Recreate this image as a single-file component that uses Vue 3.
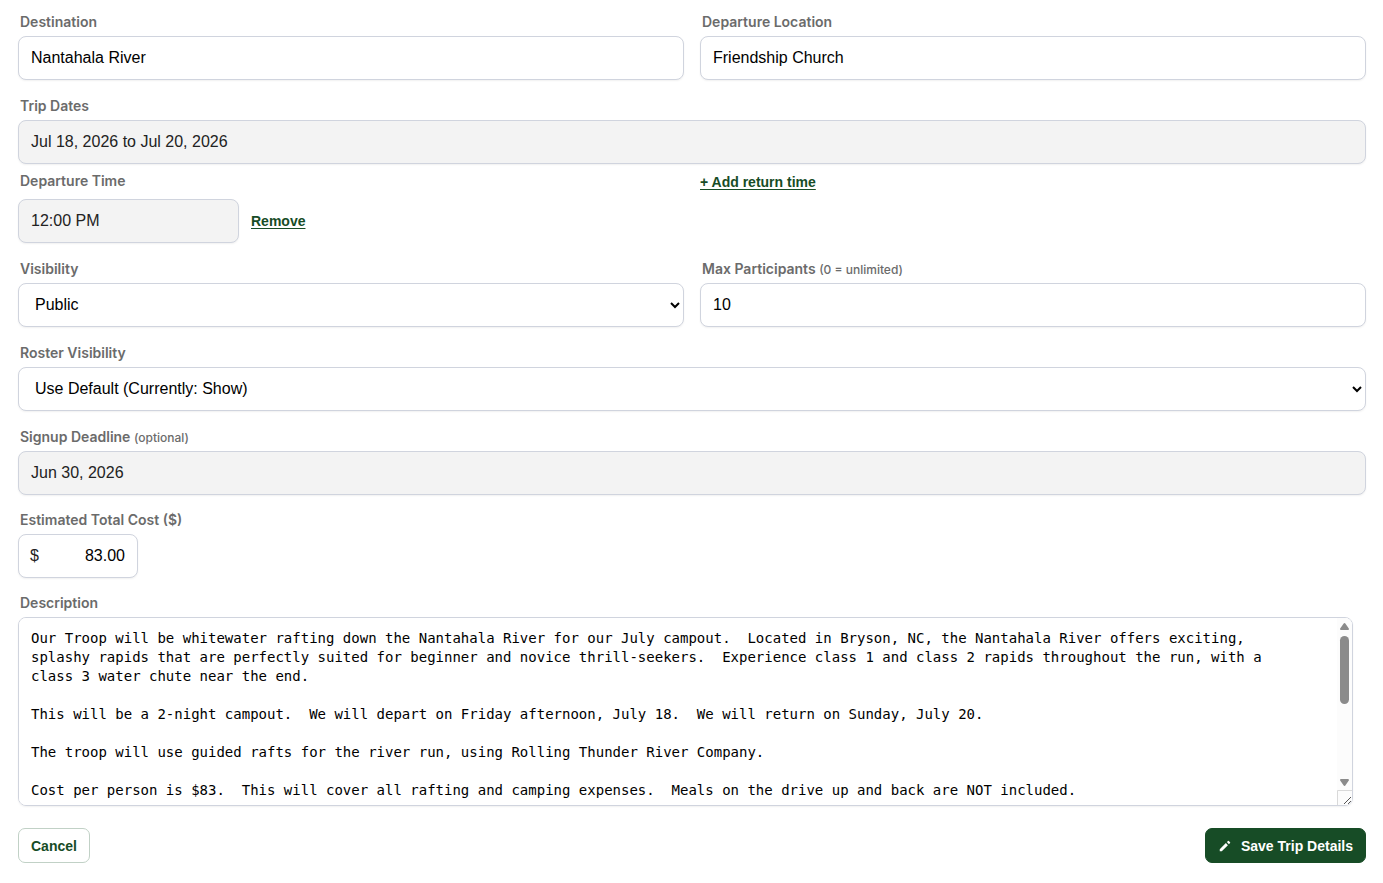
<script setup>
import { ref } from 'vue'

const destination = ref('Nantahala River')
const departureLocation = ref('Friendship Church')
const tripDates = ref('Jul 18, 2026 to Jul 20, 2026')
const departureTime = ref('12:00 PM')
const visibility = ref('public')
const maxParticipants = ref('10')
const rosterVisibility = ref('default')
const signupDeadline = ref('Jun 30, 2026')
const cost = ref('83.00')
const description = ref(
  [
    'Our Troop will be whitewater rafting down the Nantahala River for our July campout.  Located in Bryson, NC, the Nantahala River offers exciting, splashy rapids that are perfectly suited for beginner and novice thrill-seekers.  Experience class 1 and class 2 rapids throughout the run, with a class 3 water chute near the end.',
    'This will be a 2-night campout.  We will depart on Friday afternoon, July 18.  We will return on Sunday, July 20.',
    'The troop will use guided rafts for the river run, using Rolling Thunder River Company.',
    'Cost per person is $83.  This will cover all rafting and camping expenses.  Meals on the drive up and back are NOT included.',
  ].join('\n\n')
)
</script>

<template>
  <form class="trip-form" @submit.prevent>
    <div class="section">
      <div class="columns">
        <div class="field">
          <label for="destination">Destination</label>
          <input id="destination" v-model="destination" class="control" type="text" />
        </div>
        <div class="field">
          <label for="departure-location">Departure Location</label>
          <input id="departure-location" v-model="departureLocation" class="control" type="text" />
        </div>
      </div>

      <div class="dates">
        <div class="field">
          <label for="trip-dates">Trip Dates</label>
          <input id="trip-dates" v-model="tripDates" class="control picker" type="text" readonly />
        </div>
        <div class="columns">
          <div class="field time">
            <label for="departure-time">Departure Time</label>
            <div class="time-row">
              <input id="departure-time" v-model="departureTime" class="control picker" type="text" readonly />
              <a class="link" href="#">Remove</a>
            </div>
          </div>
          <div><a class="link" href="#">+ Add return time</a></div>
        </div>
      </div>

      <div class="columns">
        <div class="field">
          <label for="visibility">Visibility</label>
          <select id="visibility" v-model="visibility" class="control">
            <option value="public">Public</option>
          </select>
        </div>
        <div class="field">
          <label for="max-participants">Max Participants <small>(0 = unlimited)</small></label>
          <input id="max-participants" v-model="maxParticipants" class="control" type="text" inputmode="numeric" />
        </div>
      </div>

      <div class="field">
        <label for="roster-visibility">Roster Visibility</label>
        <select id="roster-visibility" v-model="rosterVisibility" class="control">
          <option value="default">Use Default (Currently: Show)</option>
        </select>
      </div>
    </div>

    <div class="section compact">
      <div class="field">
        <label for="signup-deadline">Signup Deadline <small>(optional)</small></label>
        <input id="signup-deadline" v-model="signupDeadline" class="control picker" type="text" readonly />
      </div>

      <div class="field">
        <label for="cost">Estimated Total Cost ($)</label>
        <div class="money">
          <span class="currency">$</span>
          <input id="cost" v-model="cost" class="control" type="text" inputmode="decimal" />
        </div>
      </div>

      <div class="field">
        <label for="description">Description</label>
        <div class="editor">
          <textarea id="description" v-model="description" class="control" spellcheck="false"></textarea>
          <div class="scrollbar" aria-hidden="true">
            <svg class="arrow" viewBox="0 0 15 16" width="15" height="16">
              <path d="M7.500 6 11 11H4z" />
            </svg>
            <div class="track"><div class="thumb"></div></div>
            <svg class="arrow" viewBox="0 0 15 14" width="15" height="14">
              <path d="M7.500 9 11 4H4z" />
            </svg>
            <svg class="grip" viewBox="0 0 15 15" width="15" height="15">
              <path class="edge" d="M0.500 15V0.500H15" />
              <path class="lines" d="M7 14 14 7M11 14 14 11" />
            </svg>
          </div>
        </div>
      </div>
    </div>

    <div class="actions">
      <button class="button cancel" type="button">Cancel</button>
      <button class="button save" type="submit">
        <svg viewBox="0 0 24 24" width="14" height="14" aria-hidden="true">
          <path d="M3 17.500V21h3.500L17 10.500 13.500 7zM20.700 6.800a1 1 0 0 0 0-1.400l-2.100-2.100a1 1 0 0 0-1.400 0L15.200 5.300 18.700 8.800z" fill="#fff" />
        </svg>
        Save Trip Details
      </button>
    </div>
  </form>
</template>

<style>
body {
  background: #fff;
}
</style>

<style scoped>
.trip-form {
  padding: 14px 17px 20px 18px;
  font-family: "Liberation Sans", Arial, sans-serif;
  color: #222;
}

.section {
  display: flex;
  flex-direction: column;
  gap: 18px;
}

.section.compact {
  gap: 17px;
  margin-top: 18px;
}

.columns {
  display: grid;
  grid-template-columns: 1fr 1fr;
  gap: 16px;
}

.field {
  display: flex;
  flex-direction: column;
  gap: 6px;
  min-width: 0;
}

.dates {
  display: flex;
  flex-direction: column;
  gap: 9px;
}

.time {
  gap: 10px;
}

.time-row {
  display: flex;
  align-items: center;
  gap: 12px;
}

.time-row .control {
  width: 221px;
}

label {
  padding-left: 2px;
  font-family: Inter, sans-serif;
  font-size: 14px;
  font-weight: 600;
  line-height: 16px;
  color: #6b6b6b;
}

label small {
  font-size: 12px;
  font-weight: 500;
  line-height: 12px;
}

.control {
  box-sizing: border-box;
  width: 100%;
  height: 44px;
  margin: 0;
  padding: 0 12px;
  border: 1px solid #d0d4de;
  border-radius: 8px;
  background: #fff;
  box-shadow: 0 1px 2px rgba(0, 0, 0, 0.06);
  color: #000;
  font-family: "Liberation Sans", Arial, sans-serif;
  font-size: 16px;
  outline: none;
}

select.control {
  padding: 0 0 2px 12px;
}

.control.picker {
  background: #f3f3f3;
  color: #222;
}

.money {
  position: relative;
  width: 120px;
}

.money .control {
  text-align: right;
}

.currency {
  position: absolute;
  top: 13px;
  left: 12px;
  font-size: 16px;
  line-height: 18px;
}

.editor {
  position: relative;
  width: 99%;
}

textarea.control {
  display: block;
  height: 189px;
  padding: 11px 52px 11px 12px;
  font-family: "DejaVu Sans Mono", monospace;
  font-size: 14px;
  line-height: 19px;
  resize: none;
}

.scrollbar {
  position: absolute;
  top: 1px;
  right: 1px;
  bottom: 1px;
  display: flex;
  flex-direction: column;
  width: 15px;
  border-radius: 0 7px 7px 0;
  background: #fcfcfc;
  overflow: hidden;
}

.track {
  flex: 1;
  padding: 2px 3px;
}

.thumb {
  height: 49%;
  border-radius: 5px;
  background: #8b8b8b;
}

.arrow {
  display: block;
  fill: #8b8b8b;
  stroke: #8b8b8b;
  stroke-width: 2;
  stroke-linejoin: round;
}

.grip {
  display: block;
  fill: none;
}

.edge {
  stroke: #d9d9d9;
}

.lines {
  stroke: #555;
}

.link {
  font-size: 14px;
  font-weight: 700;
  line-height: 18px;
  color: #174c26;
  text-decoration: underline;
  text-underline-offset: 2px;
}

.actions {
  display: flex;
  justify-content: space-between;
  margin-top: 22px;
}

.button {
  display: flex;
  align-items: center;
  gap: 9px;
  height: 35px;
  padding: 0 12px;
  border: 1px solid #174c26;
  border-radius: 7px;
  font-family: "Liberation Sans", Arial, sans-serif;
  font-size: 14px;
  font-weight: 700;
  cursor: pointer;
}

.cancel {
  border-color: #c1d1c6;
  background: #fff;
  color: #174c26;
}

.save {
  background: #174c26;
  color: #fff;
}
</style>
